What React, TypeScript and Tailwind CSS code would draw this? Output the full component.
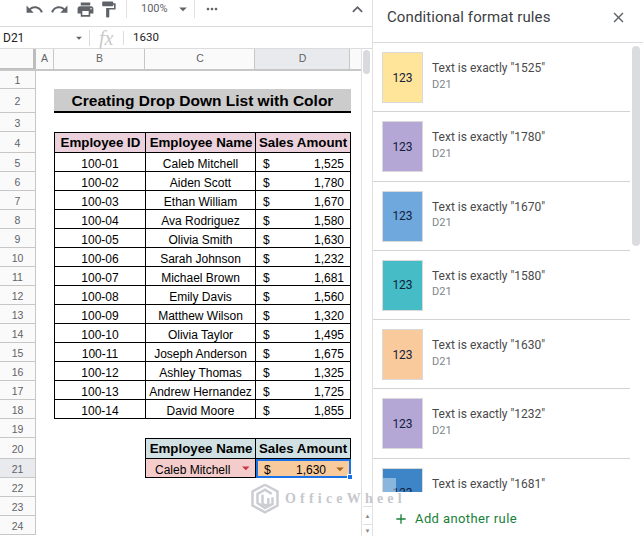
import React from "react";
import { MdUndo, MdRedo, MdPrint, MdFormatPaint, MdMoreHoriz, MdExpandLess, MdArrowDropDown, MdClose, MdAdd } from "react-icons/md";

const data: [string, string, string][] = [
  ["100-01", "Caleb Mitchell", "1,525"],
  ["100-02", "Aiden Scott", "1,780"],
  ["100-03", "Ethan William", "1,670"],
  ["100-04", "Ava Rodriguez", "1,580"],
  ["100-05", "Olivia Smith", "1,630"],
  ["100-06", "Sarah Johnson", "1,232"],
  ["100-07", "Michael Brown", "1,681"],
  ["100-08", "Emily Davis", "1,560"],
  ["100-09", "Matthew Wilson", "1,320"],
  ["100-10", "Olivia Taylor", "1,495"],
  ["100-11", "Joseph Anderson", "1,675"],
  ["100-12", "Ashley Thomas", "1,325"],
  ["100-13", "Andrew Hernandez", "1,725"],
  ["100-14", "David Moore", "1,855"],
];

const rules: [string, string][] = [
  ["1525", "bg-[#ffe599]"],
  ["1780", "bg-[#b4a7d6]"],
  ["1670", "bg-[#6fa8dc]"],
  ["1580", "bg-[#45bcc6]"],
  ["1630", "bg-[#f9cb9c]"],
  ["1232", "bg-[#b4a7d6]"],
  ["1681", "bg-[#3d85c6]"],
];

function Row({ n, h, active, children }: { n: number; h: string; active?: boolean; children?: React.ReactNode }) {
  return (
    <div className={`flex ${h}`}>
      <div className={`w-[36px] shrink-0 flex items-center justify-center pt-[3px] border-r border-b border-[#c7c7c7] text-[10.5px] text-[#5f6368] ${active ? "bg-[#e8eaed]" : "bg-[#fafafa]"}`}>
        {n}
      </div>
      <div className="w-[18px] shrink-0" />
      {children}
    </div>
  );
}

function DataRow({ n, id, name, amount }: { n: number; id: string; name: string; amount: string }) {
  return (
    <Row n={n} h="h-[19px]">
      <div className="w-[92px] shrink-0 flex items-center justify-center pt-[3px] border-l border-r border-b border-black">{id}</div>
      <div className="w-[110px] shrink-0 flex items-center justify-center pt-[3px] border-r border-b border-black whitespace-nowrap">{name}</div>
      <div className="w-[95px] shrink-0 flex items-center justify-between pt-[3px] pl-[7px] pr-[6px] border-r border-b border-black">
        <span>$</span>
        <span>{amount}</span>
      </div>
    </Row>
  );
}

export default function App() {
  return (
    <div className="relative w-[643px] h-[536px] overflow-hidden bg-white flex font-['Liberation_Sans',Arial,sans-serif] text-[12px] text-black">
      <div className="w-[372px] shrink-0 flex flex-col">
        {/* toolbar */}
        <div className="h-[27px] shrink-0 border-b border-[#dadce0] flex items-center text-[#5f6368] pb-[8px]">
          <MdUndo className="ml-[25px] text-[19px]" />
          <MdRedo className="ml-[6px] text-[19px]" />
          <MdPrint className="ml-[7px] text-[19px]" />
          <MdFormatPaint className="ml-[4px] text-[19px]" />
          <div className="ml-[8px] w-px h-[18px] bg-[#e0e0e0]" />
          <span className="ml-[14px] text-[11px] font-['Roboto',sans-serif]">100%</span>
          <MdArrowDropDown className="ml-[6px] text-[18px]" />
          <div className="ml-[2px] w-px h-[18px] bg-[#e0e0e0]" />
          <MdMoreHoriz className="ml-[9px] text-[16px]" />
          <MdExpandLess className="ml-[127px] text-[21px]" />
        </div>
        {/* formula bar */}
        <div className="h-[22px] shrink-0 border-b border-[#dadce0] flex items-center text-[12px] font-['Roboto',sans-serif]">
          <span className="ml-[3px] w-[69px] text-[#222]">D21</span>
          <MdArrowDropDown className="text-[14px] text-[#5f6368]" />
          <div className="ml-[3px] w-px h-[16px] bg-[#dadce0]" />
          <span className="ml-[9px] w-[15px] text-[20px] leading-none text-[#c9c9c9] italic font-['Liberation_Serif',serif]">fx</span>
          <div className="ml-[9px] w-px h-[14px] bg-[#dadce0]" />
          <span className="ml-[9px] text-[11.5px] text-[#222]">1630</span>
        </div>
        <div className="flex-1 flex min-h-0">
          <div className="w-[361px] shrink-0 flex flex-col">
            {/* column header */}
            <div className="h-[22px] shrink-0 flex text-[10.5px] text-[#5f6368] border-b-2 border-[#c7c7c7] bg-[#fafafa]">
              <div className="w-[36px] shrink-0 border-r-[3px] border-b border-[#bdbdbd]" />
              <div className="w-[18px] shrink-0 flex items-center justify-center border-r border-[#c7c7c7]">A</div>
              <div className="w-[91px] shrink-0 flex items-center justify-center pl-[1px] border-r border-[#c7c7c7]">B</div>
              <div className="w-[110px] shrink-0 flex items-center justify-center pl-[1px] border-r border-[#c7c7c7]">C</div>
              <div className="w-[95px] shrink-0 flex items-center justify-center pl-[1px] border-r border-[#c7c7c7] bg-[#e8eaed]">D</div>
              <div className="flex-1" />
            </div>
            <Row n={1} h="h-[18px]" />
            <Row n={2} h="h-[24px]">
              <div className="w-[297px] shrink-0 flex items-center justify-center pt-[2px] bg-[#cccccc] border-b-2 border-black font-bold text-[15.5px] whitespace-nowrap">
                Creating Drop Down List with Color
              </div>
            </Row>
            <Row n={3} h="h-[19px]" />
            <Row n={4} h="h-[21px]">
              <div className="w-[92px] shrink-0 flex items-center justify-center pl-[1px] border border-black bg-[#ead1dc] font-bold text-[13.3px] whitespace-nowrap">Employee ID</div>
              <div className="w-[110px] shrink-0 flex items-center justify-center pl-[1px] border-y border-r border-black bg-[#ead1dc] font-bold text-[13.3px] whitespace-nowrap">Employee Name</div>
              <div className="w-[95px] shrink-0 flex items-center justify-center border-y border-r border-black bg-[#ead1dc] font-bold text-[13.3px] whitespace-nowrap">Sales Amount</div>
            </Row>
            {data.map((d, i) => (
              <DataRow key={d[0]} n={i + 5} id={d[0]} name={d[1]} amount={d[2]} />
            ))}
            <Row n={19} h="h-[19px]" />
            <Row n={20} h="h-[21px]">
              <div className="w-[91px] shrink-0" />
              <div className="w-[111px] shrink-0 flex items-center justify-center pl-[1px] border border-black bg-[#d0e0e3] font-bold text-[13.3px] whitespace-nowrap">Employee Name</div>
              <div className="w-[95px] shrink-0 flex items-center justify-center border-y border-r border-black bg-[#d0e0e3] font-bold text-[13.3px] whitespace-nowrap">Sales Amount</div>
            </Row>
            <Row n={21} h="h-[19px]" active>
              <div className="w-[91px] shrink-0" />
              <div className="w-[111px] shrink-0 flex items-center border-x border-b border-black bg-[#f4cccc] pl-[9px]">
                <span className="whitespace-nowrap pt-[3px]">Caleb Mitchell</span>
                <MdArrowDropDown className="ml-[7px] text-[18px] text-[#cc3344]" />
              </div>
              <div className="relative w-[95px] shrink-0 flex items-center border-2 border-[#1a73e8] bg-[#f9cb9c] pl-[6px] pr-0">
                <span className="pt-[2px]">$</span>
                <span className="ml-auto pt-[2px]">1,630</span>
                <MdArrowDropDown className="ml-[5px] text-[18px] text-[#a5631c]" />
                <div className="absolute -right-[4px] -bottom-[4px] w-[6px] h-[6px] bg-[#1a73e8] border border-white" />
              </div>
            </Row>
            <Row n={22} h="h-[19px]" />
            <Row n={23} h="h-[19px]" />
            <Row n={24} h="h-[19px]" />
          </div>
          {/* sheet scrollbar */}
          <div className="flex-1 flex flex-col items-start border-l border-[#e0e0e0] pl-[1px] pt-[1px]">
            <div className="w-[7px] h-[24px] bg-[#d9dadd] rounded-[4px]" />
            <div className="mt-auto w-full flex flex-col items-center text-[#888] text-[6px] leading-none border-t border-[#e0e0e0]">
              <span className="h-[17px] flex items-center">▲</span>
              <span className="w-full h-[12px] flex items-center justify-center border-t border-[#e0e0e0]">▼</span>
            </div>
          </div>
        </div>
      </div>

      {/* side panel */}
      <div className="flex-1 flex flex-col min-w-0 border-l border-[#e0e0e0] font-['Roboto',sans-serif]">
        <div className="h-[43px] shrink-0 border-b border-[#dadce0] flex items-center pl-[14px] pb-[8px] pr-[16px]">
          <span className="text-[15px] text-[#3c4043] tracking-[0.1px]">Conditional format rules</span>
          <MdClose className="ml-auto text-[17px] text-[#5f6368]" />
        </div>
        <div className="flex-1 min-h-0 flex">
          <div className="w-[257px] shrink-0 overflow-hidden">
            {rules.map(([v, c]) => (
              <div key={v} className="h-[69.3px] shrink-0 flex border-b border-[#d3d3d3] pl-[9px] pt-[9px]">
                <div className={`w-[41px] h-[51px] shrink-0 flex items-center justify-center border border-[#d9d9d9] text-[12px] text-[#12203a] ${c}`}>
                  123
                </div>
                <div className="ml-[9px] pt-[8px] leading-[16.5px]">
                  <div className="text-[12px] text-[#4a4a4a] whitespace-nowrap">{`Text is exactly "${v}"`}</div>
                  <div className="text-[11px] text-[#80868b]">D21</div>
                </div>
              </div>
            ))}
          </div>
          <div className="flex-1 pt-[3px] pl-[2px]">
            <div className="w-[8px] h-[200px] bg-[#dadce0] rounded-[4px]" />
          </div>
        </div>
        <div className="h-[44px] shrink-0 bg-white flex items-center pl-[20px] text-[#188038] text-[13px] tracking-[0.4px] pt-[10px]">
          <MdAdd className="text-[16px]" />
          <span className="ml-[6px]">Add another rule</span>
        </div>
      </div>

      {/* watermark */}
      <div className="absolute left-[250px] top-[483px] flex items-center opacity-60">
        <svg width="30" height="31" viewBox="0 0 36 37" fill="none" stroke="#a9adb5" strokeWidth="3">
          <path d="M18 2 L33 10 V27 L18 35 L3 27 V10 L18 2" />
          <path d="M26 13 L18 8 L9 13 V24 L18 30 L27 25 V17" />
          <path d="M15 14 V25 L19 27 L22 25 V18" />
        </svg>
        <span className="ml-[5px] font-['Liberation_Serif',serif] font-bold text-[14px] tracking-[4.2px] text-[#a0a4ac]">OfficeWheel</span>
      </div>
      <div className="absolute left-[383px] top-[478px] w-[13px] h-[14px] bg-white/40" />
    </div>
  );
}
